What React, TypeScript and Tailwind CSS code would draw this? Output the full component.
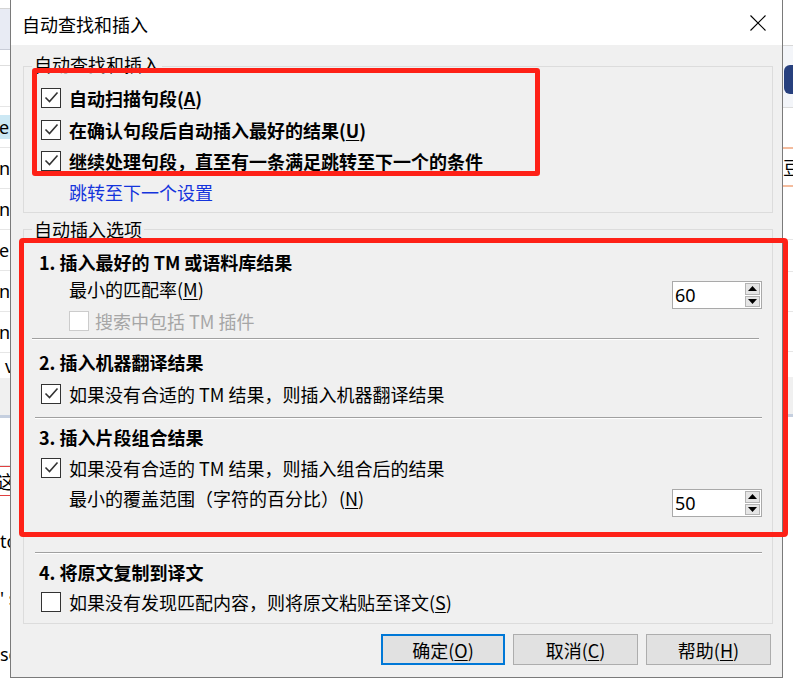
import React from "react";

const cjk = "font-['Noto_Sans_CJK_SC','Noto_Sans',sans-serif]";

function Check({ checked = false, disabled = false }: { checked?: boolean; disabled?: boolean }) {
  return (
    <div
      className={
        disabled
          ? "w-[20px] h-[20px] shrink-0 border border-[#cccccc] bg-white"
          : "w-[20px] h-[20px] shrink-0 border border-[#333333] bg-white"
      }
    >
      {checked && (
        <svg width="18" height="18" viewBox="0 0 18 18">
          <path d="M3.5 8.5 L7.5 12.5 L15.5 3.5" fill="none" stroke="#333" strokeWidth="1.6" />
        </svg>
      )}
    </div>
  );
}

function Spin({ value }: { value: string }) {
  return (
    <div className="w-[90px] h-[28px] border border-[#a9a9a9] bg-white flex">
      <div className="flex-1 pl-[2px] pt-[4px] text-[18px] leading-[18px] text-black font-['Noto_Sans',sans-serif]">
        {value}
      </div>
      <div className="w-[16px] flex flex-col gap-[1px] py-[1px] pr-[1px]">
        <div className="flex-1 bg-[#e5e5e5] border border-[#b4b4b4] flex items-center justify-center">
          <svg width="9" height="5" viewBox="0 0 9 5">
            <path d="M0 5 L4.5 0 L9 5 Z" fill="#000" />
          </svg>
        </div>
        <div className="flex-1 bg-[#e5e5e5] border border-[#b4b4b4] flex items-center justify-center">
          <svg width="9" height="5" viewBox="0 0 9 5">
            <path d="M0 0 L9 0 L4.5 5 Z" fill="#000" />
          </svg>
        </div>
      </div>
    </div>
  );
}

function Sep({ first = false }: { first?: boolean }) {
  return (
    <div
      className={
        first
          ? "ml-[8px] mr-[13px] h-[2px] border-t border-[#a0a0a0] border-b border-b-white"
          : "ml-[11px] mr-[10px] h-[2px] border-t border-[#a0a0a0] border-b border-b-white"
      }
    />
  );
}

function Btn({ label, k, primary = false, w }: { label: string; k: string; primary?: boolean; w: string }) {
  return (
    <div
      className={
        (primary
          ? "border-2 border-[#0078d7] "
          : "border border-[#adadad] ") +
        w +
        " h-[31px] bg-[#e1e1e1] flex items-center justify-center text-[18px] leading-[18px] text-black"
      }
    >
      {label}(<u className="underline-offset-2">{k}</u>)
    </div>
  );
}

function BgRow({ children }: { children?: React.ReactNode }) {
  return <div className="h-[41px] shrink-0 border-b border-[#e6e6e6] flex items-center">{children}</div>;
}

export default function App() {
  return (
    <div className={"relative w-[793px] h-[689px] overflow-hidden bg-white flex flex-col " + cjk}>
      <div className="flex h-[678px]">
        {/* app behind, left edge */}
        <div className="w-[10px] h-[678px] flex flex-col overflow-hidden whitespace-nowrap text-[18px] leading-[18px] text-black font-['Noto_Sans',sans-serif]">
          <div className="h-[9px] shrink-0 border-b border-[#d4d4d4]" />
          <div className="h-[41px] shrink-0 bg-[#e8ebf4] border-b border-[#c9cdd8]" />
          <div className="h-[16px] shrink-0 border-b border-[#dedede]" />
          <BgRow />
          <BgRow>
            <div className="h-[24px] w-full bg-[#cce8f4] flex items-center">
              <span className="-ml-[1px]">er</span>
            </div>
          </BgRow>
          <BgRow>
            <span className="-ml-[1px]">n</span>
          </BgRow>
          <BgRow>
            <span className="-ml-[1px]">ni</span>
          </BgRow>
          <BgRow>
            <span className="-ml-[1px]">er</span>
          </BgRow>
          <BgRow>
            <span className="-ml-[1px]">n</span>
          </BgRow>
          <BgRow>
            <span className="-ml-[1px]">n</span>
          </BgRow>
          <div className="h-[25px] shrink-0 flex items-center pl-[5px]">v</div>
          <div className="h-[37px] shrink-0 bg-[#f0f0f0]" />
          <div className="h-[3px] shrink-0 bg-[#c5cfdf]" />
          <div className="h-[48px] shrink-0 border-b border-[#e2e2e2]" />
          <div className={"h-[30px] shrink-0 border-y border-[#e04040] flex items-center " + cjk}>
            <span className="-ml-[3px]">这</span>
          </div>
          <div className="h-[34px] shrink-0" />
          <div className="h-[22px] shrink-0 flex items-center">to</div>
          <div className="h-[35px] shrink-0" />
          <div className="h-[22px] shrink-0 flex items-center">' s</div>
          <div className="h-[34px] shrink-0" />
          <div className="h-[22px] shrink-0 flex items-center">se</div>
        </div>

        {/* dialog */}
        <div className="w-[773px] h-[678px] shrink-0 border-x border-b border-[#7a7a7a] bg-[#f0f0f0] flex flex-col text-black">
          <div className="h-[45px] shrink-0 bg-white flex items-center justify-between pl-[11px] pr-[16px] pt-[3px]">
            <span className="text-[18px] leading-[18px]">自动查找和插入</span>
            <svg width="16" height="16" viewBox="0 0 16 16" className="-mt-[2px]">
              <path d="M0.5 0.5 L15.5 15.5 M15.5 0.5 L0.5 15.5" stroke="#000" strokeWidth="1.1" />
            </svg>
          </div>

          <div className="flex-1 pl-[12px] pr-[9px] flex flex-col">
            {/* group 1 */}
            <div className="relative mt-[21px] h-[147px] shrink-0 border border-[#dcdcdc] pt-[15px]">
              <div className="absolute left-[8px] -top-[12px] px-[2px] bg-[#f0f0f0] text-[18px] leading-[18px]">
                自动查找和插入
              </div>
              <div className="h-[32px] flex items-center gap-[8px] pl-[17px]">
                <Check checked />
                <span className="text-[18px] leading-[18px] font-bold">
                  自动扫描句段(<u className="underline-offset-2">A</u>)
                </span>
              </div>
              <div className="h-[31px] flex items-center gap-[8px] pl-[17px]">
                <Check checked />
                <span className="text-[18px] leading-[18px] font-bold">
                  在确认句段后自动插入最好的结果(<u className="underline-offset-2">U</u>)
                </span>
              </div>
              <div className="h-[32px] flex items-center gap-[8px] pl-[17px]">
                <Check checked />
                <span className="text-[18px] leading-[18px] font-bold">继续处理句段，直至有一条满足跳转至下一个的条件</span>
              </div>
              <div className="h-[30px] flex items-center pl-[45px]">
                <span className="text-[18px] leading-[18px] text-[#1434dc]">跳转至下一个设置</span>
              </div>
            </div>

            {/* group 2 */}
            <div className="relative mt-[16px] h-[395px] shrink-0 border border-[#dcdcdc] pt-[18px] flex flex-col">
              <div className="absolute left-[8px] -top-[10px] px-[2px] bg-[#f0f0f0] text-[18px] leading-[18px]">
                自动插入选项
              </div>

              <div className="h-[28px] shrink-0 flex items-center pl-[15px] text-[18px] leading-[18px] font-bold">
                1. 插入最好的 TM 或语料库结果
              </div>
              <div className="h-[32px] shrink-0 flex items-start justify-between pl-[45px] pr-[10px]">
                <span className="mt-[4px] text-[18px] leading-[18px]">
                  最小的匹配率(<u className="underline-offset-2">M</u>)
                </span>
                <div className="mt-[5px]">
                  <Spin value="60" />
                </div>
              </div>
              <div className="h-[26px] shrink-0 flex items-center gap-[6px] pl-[45px]">
                <Check disabled />
                <span className="text-[18px] leading-[18px] text-[#a6a6a6]">搜索中包括 TM 插件</span>
              </div>
              <div className="mt-[4px]">
                <Sep first />
              </div>

              <div className="mt-[8px] h-[28px] shrink-0 flex items-center pl-[15px] text-[18px] leading-[18px] font-bold">
                2. 插入机器翻译结果
              </div>
              <div className="mt-[4px] h-[28px] shrink-0 flex items-center gap-[8px] pl-[17px]">
                <Check checked />
                <span className="text-[18px] leading-[18px]">如果没有合适的 TM 结果，则插入机器翻译结果</span>
              </div>
              <div className="mt-[9px]">
                <Sep />
              </div>

              <div className="mt-[4px] h-[28px] shrink-0 flex items-center pl-[15px] text-[18px] leading-[18px] font-bold">
                3. 插入片段组合结果
              </div>
              <div className="mt-[3px] h-[28px] shrink-0 flex items-center gap-[8px] pl-[17px]">
                <Check checked />
                <span className="text-[18px] leading-[18px]">如果没有合适的 TM 结果，则插入组合后的结果</span>
              </div>
              <div className="h-[35px] shrink-0 flex items-start justify-between pl-[45px] pr-[10px]">
                <span className="mt-[7px] text-[18px] leading-[18px]">
                  最小的覆盖范围（字符的百分比）(<u className="underline-offset-2">N</u>)
                </span>
                <div className="mt-[7px]">
                  <Spin value="50" />
                </div>
              </div>
              <div className="mt-[35px]">
                <Sep />
              </div>

              <div className="mt-[4px] h-[28px] shrink-0 flex items-center pl-[15px] text-[18px] leading-[18px] font-bold">
                4. 将原文复制到译文
              </div>
              <div className="mt-[2px] h-[28px] shrink-0 flex items-center gap-[8px] pl-[17px]">
                <Check />
                <span className="text-[18px] leading-[18px]">
                  如果没有发现匹配内容，则将原文粘贴至译文(<u className="underline-offset-2">S</u>)
                </span>
              </div>
            </div>

            {/* buttons */}
            <div className="mt-[10px] flex justify-end gap-[8px] pr-[2px]">
              <Btn label="确定" k="O" primary w="w-[124px]" />
              <Btn label="取消" k="C" w="w-[125px]" />
              <Btn label="帮助" k="H" w="w-[125px]" />
            </div>
          </div>
        </div>

        {/* app behind, right edge */}
        <div className="w-[10px] h-[678px] flex flex-col overflow-hidden whitespace-nowrap text-[18px] leading-[18px] text-black">
          <div className="h-[46px] shrink-0 border-b border-[#d8d8d8]" />
          <div className="h-[62px] shrink-0 bg-[#f3f5f9] border-b border-[#dcdcdc] flex items-start">
            <div className="mt-[19px] ml-[1px] w-[9px] h-[29px] rounded-l-[6px] bg-[#27407e]" />
          </div>
          <div className="h-[39px] shrink-0" />
          <div className="h-[40px] shrink-0 border-y-2 border-[#f4bc9e] bg-white flex items-center">
            <span>豆</span>
          </div>
          <div className="h-[53px] shrink-0 border-b border-[#e6e6e6]" />
          <div className="h-[32px] shrink-0 border-b border-[#e6e6e6]" />
          <div className="h-[40px] shrink-0 border-b border-[#e6e6e6]" />
          <div className="h-[40px] shrink-0 border-b border-[#e6e6e6]" />
          <div className="h-[25px] shrink-0" />
          <div className="h-[37px] shrink-0 bg-[#f0f0f0]" />
          <div className="h-[3px] shrink-0 bg-[#c5cfdf]" />
        </div>
      </div>

      {/* annotation boxes */}
      <div className="absolute left-[32px] top-[68px] w-[508px] h-[108px] border-[5px] border-[#fe2117] rounded-[3px]" />
      <div className="absolute left-[19px] top-[238px] w-[769px] h-[299px] border-[5px] border-[#fe2117] rounded-[4px]" />
    </div>
  );
}
